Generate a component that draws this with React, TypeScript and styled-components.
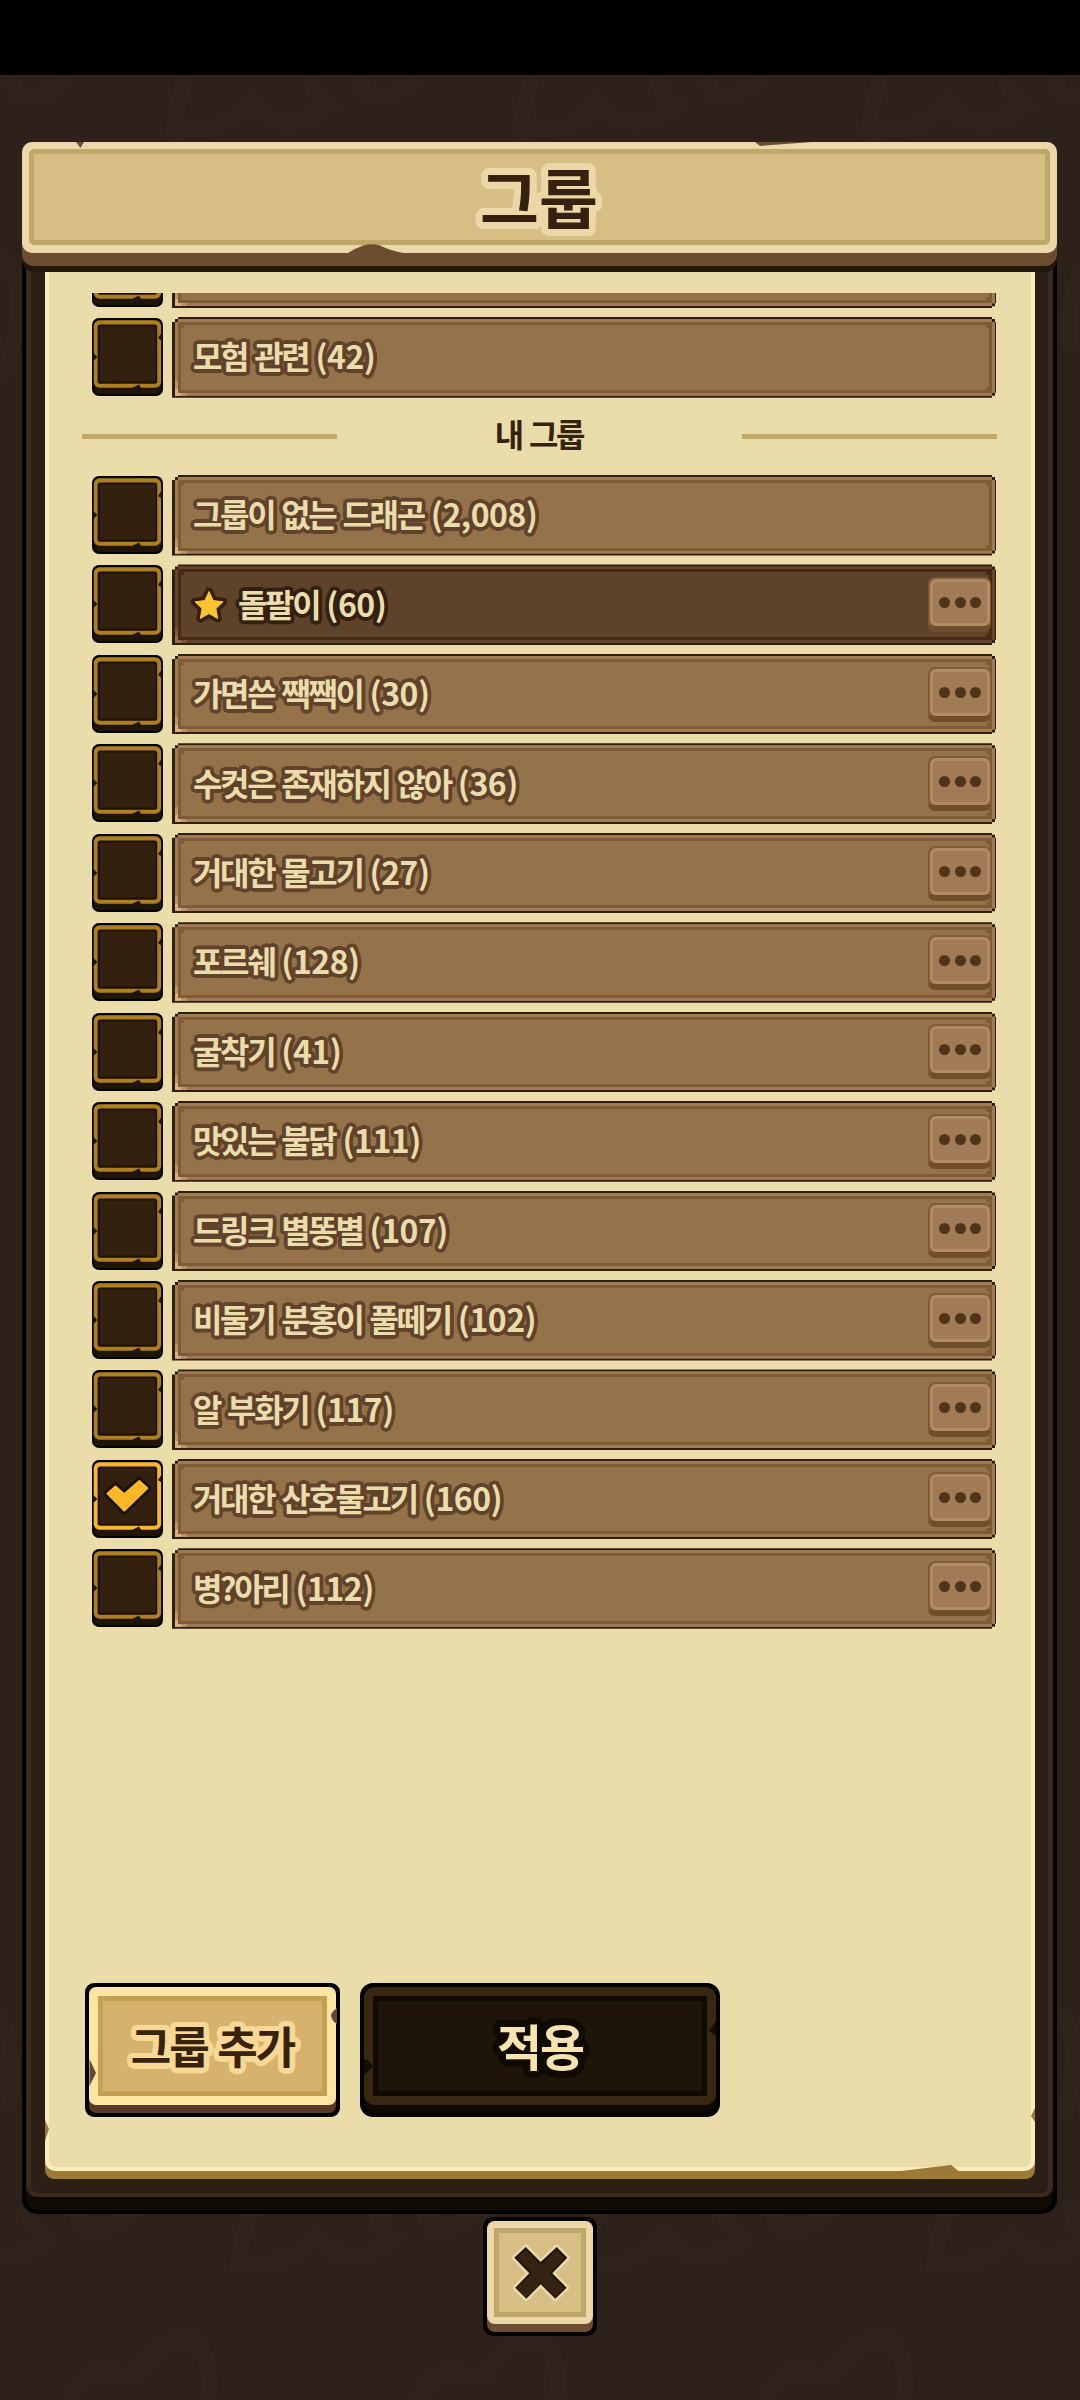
import React from 'react';
import styled, { createGlobalStyle, css } from 'styled-components';

const GlobalStyle = createGlobalStyle`
  * { box-sizing: border-box; }
  body { margin: 0; background: #2e211a; }
  button { border: 0; padding: 0; margin: 0; background: none; font: inherit; }
`;

const ring = (radius: number, color: string) =>
  [radius, radius * 0.55]
    .flatMap((r) =>
      Array.from({ length: 24 }, (_, i) => {
        const a = (i * Math.PI) / 12;
        return `${(Math.cos(a) * r).toFixed(2)}px ${(Math.sin(a) * r).toFixed(2)}px 0 ${color}`;
      }),
    )
    .join(', ');

const outlined = css<{ $outline: string; $stroke: number }>`
  text-shadow: ${(p) => ring(p.$stroke, p.$outline)};
`;

const Screen = styled.div`
  position: relative;
  display: flex;
  flex-direction: column;
  width: 1080px;
  height: 2400px;
  overflow: hidden;
  background: #2e211a;
  font-family: 'Noto Sans CJK KR', 'Noto Sans', sans-serif;
  font-weight: 700;
`;

const Backdrop = styled.svg`
  position: absolute;
  inset: 0;
`;

const StatusBar = styled.div`
  position: relative;
  flex: none;
  height: 75px;
  background: #000;
`;

const Dialog = styled.main`
  position: relative;
  display: flex;
  flex-direction: column;
  align-items: center;
  width: 1035px;
  margin: 67px 0 0 22px;
`;

const Header = styled.header`
  position: relative;
  z-index: 1;
  width: 100%;
  height: 130px;
  padding-bottom: 6px;
  border-radius: 10px 10px 12px 12px;
  background: #22170d;
`;

const HeaderSide = styled.div`
  height: 124px;
  padding-bottom: 14px;
  border-radius: 10px 10px 12px 12px;
  background: #6c4d32;
`;

const HeaderFace = styled.div`
  height: 110.5px;
  padding: 7px;
  border-radius: 10px;
  background: #ebd7a7;
`;

const HeaderPlate = styled.div`
  display: flex;
  align-items: center;
  justify-content: center;
  height: 96px;
  padding: 0 1px 5px 0;
  border: 5px solid #bfa669;
  border-radius: 5px;
  background: #d7be84;
`;

const Title = styled.h1<{ $outline: string; $stroke: number }>`
  margin: 0;
  font-size: 64px;
  line-height: 80px;
  color: #35210f;
  ${outlined}
`;

const Chips = styled.svg`
  position: absolute;
  left: 0;
  top: 0;
  overflow: visible;
  pointer-events: none;
`;

const Panel = styled.section`
  width: 100%;
  height: 1956px;
  margin-top: -14px;
  padding: 0 4px 4px;
  border-radius: 0 0 15px 15px;
  background: #000;
`;

const PanelSide = styled.div`
  height: 1952px;
  padding-bottom: 13px;
  border-radius: 0 0 12px 12px;
  background: #100a04;
`;

const PanelRim = styled.div`
  height: 1939px;
  padding: 0 13px 14px 14px;
  border: solid #3a291d;
  border-width: 0 5px 4px;
  border-radius: 0 0 11px 11px;
  background: #2c1f17;
`;

const SheetEdge = styled.div`
  position: relative;
  height: 1921px;
  padding-bottom: 8px;
  border-radius: 0 0 9px 9px;
  background: #9c7a36;
`;

const Sheet = styled.div`
  display: flex;
  flex-direction: column;
  height: 1913px;
  padding: 35px 34px 50px 33px;
  border: solid #fbedbd;
  border-width: 0 4px 4px;
  border-radius: 0 0 10px 10px;
  background: #eadda9;
`;

const List = styled.div`
  flex: 1;
  min-height: 0;
  overflow: hidden;
`;

const Rows = styled.div<{ $scroll?: number }>`
  display: flex;
  flex-direction: column;
  gap: 8.9px;
  margin-top: ${(p) => -(p.$scroll ?? 0)}px;
`;

const Row = styled.div`
  display: flex;
  align-items: flex-start;
  gap: 9px;
  height: 80.55px;
  padding: 0 1px 0 10px;
`;

const CheckButton = styled.button`
  display: block;
  width: 71px;
  height: 78px;
  margin-top: 1px;
  svg { display: block; }
`;

const Frame = styled.div`
  flex: 1;
  height: 80.55px;
  padding: 2px 1px 2px 3px;
  background: #2d2010;
  clip-path: polygon(
    6px 0, calc(100% - 4px) 0, calc(100% - 4px) 2px, calc(100% - 1px) 2px, calc(100% - 1px) 5px, 100% 5px,
    100% calc(100% - 5px), calc(100% - 1px) calc(100% - 5px), calc(100% - 1px) calc(100% - 2px),
    calc(100% - 4px) calc(100% - 2px), calc(100% - 4px) 100%, 0 100%, 0 5px, 3px 5px, 3px 2px, 6px 2px
  );
`;

const Rim = styled.div<{ $active?: boolean }>`
  --rim: ${(p) => (p.$active ? '#664529' : '#9f7b58')};
  --groove: ${(p) => (p.$active ? '#462a14' : '#7f5c35')};
  --fill: ${(p) => (p.$active ? '#5e432a' : '#94734a')};
  --glint: ${(p) => (p.$active ? '#9a6c48' : '#dcae84')};
  position: relative;
  display: flex;
  align-items: center;
  justify-content: space-between;
  height: 100%;
  padding: 0 1px 0 15px;
  border: 3px solid var(--rim);
  box-shadow: inset 0 0 0 3px var(--groove);
  background:
    linear-gradient(var(--groove), var(--groove)) 3px 3px / 3px 3px no-repeat,
    linear-gradient(var(--groove), var(--groove)) calc(100% - 3px) 3px / 3px 3px no-repeat,
    linear-gradient(var(--groove), var(--groove)) calc(100% - 3px) calc(100% - 3px) / 3px 3px no-repeat,
    var(--fill);
  clip-path: polygon(
    3px 0, calc(100% - 3px) 0, calc(100% - 3px) 3px, 100% 3px, 100% calc(100% - 3px),
    calc(100% - 3px) calc(100% - 3px), calc(100% - 3px) 100%, 0 100%, 0 3px, 3px 3px
  );

  &::before {
    content: '';
    position: absolute;
    left: -3px;
    bottom: -3px;
    width: 12px;
    height: 15px;
    background:
      linear-gradient(var(--glint), var(--glint)) 0 100% / 6px 3px no-repeat,
      linear-gradient(var(--glint), var(--glint)) 0 100% / 3px 7px no-repeat,
      linear-gradient(color-mix(in srgb, var(--glint) 45%, var(--rim)), color-mix(in srgb, var(--glint) 45%, var(--rim))) 0 100% / 12px 3px no-repeat,
      linear-gradient(color-mix(in srgb, var(--glint) 45%, var(--rim)), color-mix(in srgb, var(--glint) 45%, var(--rim))) 0 100% / 3px 15px no-repeat;
  }
`;

const LabelGroup = styled.div`
  display: flex;
  align-items: center;
  gap: 12px;
  padding-bottom: 4px;
`;

const Label = styled.span<{ $outline: string; $stroke: number }>`
  font-size: 32px;
  line-height: 46px;
  letter-spacing: -2.35px;
  word-spacing: 2.1px;
  white-space: nowrap;
  color: #ebdcab;
  ${outlined}
`;

const Count = styled.span`
  letter-spacing: -0.5px;
`;

const Star = styled.svg`
  display: block;
  margin-left: -1px;
  margin-top: 4px;
  overflow: visible;
`;

const MoreEdge = styled.button`
  display: block;
  width: 63px;
  height: 55px;
  padding: 2px 1px 6px 2px;
  border-radius: 7px;
  background: linear-gradient(#805c36 0 48px, #704e29 49px);
`;

const MoreFace = styled.span`
  display: flex;
  align-items: center;
  justify-content: center;
  gap: 4.4px;
  height: 47px;
  border: 3px solid #b18b65;
  border-radius: 6px;
  background: #a07b55;
`;

const Dot = styled.i`
  width: 11px;
  height: 11px;
  border-radius: 50%;
  background: #4f3418;
`;

const SectionHead = styled.div`
  display: grid;
  grid-template-columns: 255px 1fr 255px;
  align-items: center;
  height: 77.4px;
`;

const Rule = styled.div`
  height: 5px;
  background: #c1a768;
`;

const SectionTitle = styled.h2`
  margin: 0;
  padding: 0 1px 7px 0;
  font-size: 32px;
  line-height: 46px;
  letter-spacing: -2.35px;
  word-spacing: 2.1px;
  text-align: center;
  font-weight: 700;
  color: #35230f;
`;

const Footer = styled.footer`
  display: flex;
  flex: none;
  gap: 20px;
  height: 134px;
  padding-left: 3px;
`;

type Tone = { side: string; face: string; line: string; plate: string; radius: number };

const Block = styled.button<{ $w: number; $h: number; $tone: Tone }>`
  position: relative;
  display: block;
  flex: none;
  width: ${(p) => p.$w}px;
  height: ${(p) => p.$h}px;
  padding: 4px;
  border-radius: ${(p) => p.$tone.radius + 2}px;
  background: #000;
`;

const BlockSide = styled.span<{ $tone: Tone }>`
  display: block;
  height: 100%;
  padding-bottom: 8px;
  border-radius: ${(p) => p.$tone.radius}px;
  background: ${(p) => p.$tone.side};
`;

const BlockFace = styled.span<{ $tone: Tone; $pad: number }>`
  display: block;
  height: 100%;
  padding: ${(p) => p.$pad}px;
  border-radius: ${(p) => p.$tone.radius}px;
  background: ${(p) => p.$tone.face};
`;

const BlockPlate = styled.span<{ $tone: Tone }>`
  display: flex;
  align-items: center;
  justify-content: center;
  height: 100%;
  border: 5px solid ${(p) => p.$tone.line};
  background: ${(p) => p.$tone.plate};
`;

const ButtonText = styled.span<{ $outline: string; $stroke: number; $size: number; $color: string }>`
  padding-bottom: 1px;
  font-size: ${(p) => p.$size}px;
  line-height: 1.4;
  letter-spacing: -2px;
  word-spacing: 1.5px;
  white-space: nowrap;
  color: ${(p) => p.$color};
  ${outlined}
`;

const CloseSlot = styled.div`
  margin-top: 3px;
  padding-left: 1px;
`;

const honey: Tone = { side: '#593a28', face: '#ffe5a3', line: '#c4a050', plate: '#d5b26d', radius: 7 };
const ebony: Tone = { side: '#0e0a02', face: '#3a2713', line: '#100b02', plate: '#1e1409', radius: 11 };
const sand: Tone = { side: '#6c4d32', face: '#ebd7a7', line: '#bfa669', plate: '#d7be84', radius: 8 };

function Checkbox({ checked }: { checked?: boolean }) {
  const gold = checked ? '#f9b62d' : '#ad7f1f';
  return (
    <CheckButton role="checkbox" aria-checked={!!checked}>
      <svg width="71" height="78" viewBox="0 0 71 78">
        <rect width="71" height="78" rx="7" fill="#000" />
        <rect x="1.7" y="2" width="67.6" height="74" rx="6" fill="#1f1508" />
        <rect x="1.7" y="2.3" width="67.4" height="67.4" rx="6" fill={gold} />
        <rect x="5.6" y="6.5" width="59.6" height="59.2" rx="2.5" fill="#1f1204" />
        <rect x="7.8" y="8.5" width="55.6" height="55" fill="#33200f" />
        <path d="M1 34.5L5.3 39L1 43.5Z M70 14L66 20L70 23Z M40 70L47 66.5L49.5 70.5Z" fill="#1f1508" />
        {checked && (
          <path
            d="M15.5 33.5L23.5 26.6L32.3 34.3L47.3 21L55.2 28.3L32.3 50.5Z"
            fill="none"
            stroke="#1b1105"
            strokeWidth="8"
            strokeLinejoin="round"
          />
        )}
        {checked && (
          <path
            d="M15.5 33.5L23.5 26.6L32.3 34.3L47.3 21L55.2 28.3L32.3 50.5Z"
            fill="#fcb827"
            stroke="#fcb827"
            strokeWidth="2"
            strokeLinejoin="round"
          />
        )}
      </svg>
    </CheckButton>
  );
}

const STAR = 'M17 3.5L21.2 12.6L31 13.8L23.9 20.6L25.7 30.5L17 25.6L8.3 30.5L10.1 20.6L3 13.8L12.8 12.6Z';

type Group = { name?: string; count?: string; starred?: boolean; checked?: boolean; fixed?: boolean };

function GroupRow({ name, count, starred, checked, fixed }: Group) {
  return (
    <Row>
      <Checkbox checked={checked} />
      <Frame>
        <Rim $active={starred}>
          <LabelGroup>
            {starred && (
              <Star width="34" height="34" viewBox="0 0 34 34">
                <path d={STAR} fill="none" stroke="#332010" strokeWidth="8" strokeLinejoin="round" />
                <path d={STAR} fill="#ffc331" stroke="#ffc331" strokeWidth="1" strokeLinejoin="round" />
              </Star>
            )}
            {name && (
              <Label $outline={starred ? '#332010' : '#61432b'} $stroke={3.6}>
                {name} <Count>({count})</Count>
              </Label>
            )}
          </LabelGroup>
          {!fixed && (
            <MoreEdge>
              <MoreFace>
                <Dot />
                <Dot />
                <Dot />
              </MoreFace>
            </MoreEdge>
          )}
        </Rim>
      </Frame>
    </Row>
  );
}

const systemGroups: Group[] = [{ fixed: true }, { name: '모험 관련', count: '42', fixed: true }];

const myGroups: Group[] = [
  { name: '그룹이 없는 드래곤', count: '2,008', fixed: true },
  { name: '돌팔이', count: '60', starred: true },
  { name: '가면쓴 짹짹이', count: '30' },
  { name: '수컷은 존재하지 않아', count: '36' },
  { name: '거대한 물고기', count: '27' },
  { name: '포르쉐', count: '128' },
  { name: '굴착기', count: '41' },
  { name: '맛있는 불닭', count: '111' },
  { name: '드링크 별똥별', count: '107' },
  { name: '비둘기 분홍이 풀떼기', count: '102' },
  { name: '알 부화기', count: '117' },
  { name: '거대한 산호물고기', count: '160', checked: true },
  { name: '병?아리', count: '112' },
];

function Motif() {
  return (
    <>
      <path d="M22 -10C16 15 10 30 8 52C50 54 72 40 86 22C100 42 130 54 164 26Q148 18 144 -10" />
      <path d="M192 -10Q198 14 206 18Q232 16 254 -4" />
    </>
  );
}

export default function App() {
  return (
    <Screen>
      <GlobalStyle />
      <Backdrop width="1080" height="2400" fill="none" stroke="#30231c" strokeWidth="17">
        {[-183, 165, 512, 860].map((x) => (
          <g key={x} transform={`translate(${x} 80)`}>
            <Motif />
          </g>
        ))}
        {[-118, 230, 578, 926].map((x) => (
          <g key={x} transform={`translate(${x} 2213)`}>
            <Motif />
          </g>
        ))}
        {[58, 406, 754].map((x) => (
          <path
            key={x}
            transform={`translate(${x} 2330)`}
            d="M8 80C18 55 30 40 42 42Q62 46 80 43C98 14 122 6 132 9C150 20 156 45 148 80"
          />
        ))}
        <path d="M-10 250Q28 270 16 330T-10 380M1090 260Q1064 290 1070 350M-10 2010Q20 2030 10 2110M1060 2010Q1084 2040 1064 2120" />
      </Backdrop>
      <StatusBar />
      <Dialog>
        <Header>
          <HeaderSide>
            <HeaderFace>
              <HeaderPlate>
                <Title $outline="#ebd7a7" $stroke={7}>그룹</Title>
              </HeaderPlate>
            </HeaderFace>
          </HeaderSide>
          <Chips width="1035" height="130" fill="#6c4d32">
            <path d="M54 0H62L58.5 6Z" />
            <path d="M733 0H790L738 4Z" />
            <path d="M326 111Q334 106 341 103.5Q350 101 358 103.5Q368 108.5 381 111Z" />
          </Chips>
        </Header>
        <Panel>
          <PanelSide>
            <PanelRim>
              <SheetEdge>
                <Sheet>
                  <List>
                    <Rows $scroll={65.35}>
                      {systemGroups.map((g, i) => (
                        <GroupRow key={i} {...g} />
                      ))}
                    </Rows>
                    <SectionHead>
                      <Rule />
                      <SectionTitle>내 그룹</SectionTitle>
                      <Rule />
                    </SectionHead>
                    <Rows>
                      {myGroups.map((g) => (
                        <GroupRow key={g.name} {...g} />
                      ))}
                    </Rows>
                  </List>
                  <Footer>
                    <Block $w={255} $h={134} $tone={honey}>
                      <BlockSide $tone={honey}>
                        <BlockFace $tone={honey} $pad={9}>
                          <BlockPlate $tone={honey}>
                            <ButtonText $size={44} $color="#38230f" $outline="#f8d894" $stroke={5.5}>
                              그룹 추가
                            </ButtonText>
                          </BlockPlate>
                        </BlockFace>
                      </BlockSide>
                      <Chips width="255" height="134" fill="#6b4632">
                        <path d="M4.5 76L11 90L4.5 103Z M252 25Q246 29 246 33Q247 38 252 41Z" />
                      </Chips>
                    </Block>
                    <Block $w={360} $h={134} $tone={ebony}>
                      <BlockSide $tone={ebony}>
                        <BlockFace $tone={ebony} $pad={9}>
                          <BlockPlate $tone={ebony}>
                            <ButtonText $size={49} $color="#f7e3af" $outline="#100b02" $stroke={6.8}>
                              적용
                            </ButtonText>
                          </BlockPlate>
                        </BlockFace>
                      </BlockSide>
                      <Chips width="360" height="134" fill="#130d04">
                        <path d="M4 76L8 77L13 84L4 92Z M356 38L349 48L356 53Z" />
                      </Chips>
                    </Block>
                  </Footer>
                </Sheet>
                <Chips width="990" height="1921" fill="#9c7a36">
                  <path d="M0 1862L4 1871L0 1883Z M990 1850L986 1858L990 1864Z M852 1913.5L906 1907L914 1913.5Z" />
                </Chips>
              </SheetEdge>
            </PanelRim>
          </PanelSide>
        </Panel>
        <CloseSlot>
          <Block $w={114} $h={119} $tone={sand} aria-label="닫기">
            <BlockSide $tone={sand}>
              <BlockFace $tone={sand} $pad={7}>
                <BlockPlate $tone={sand}>
                  <svg width="60" height="58" viewBox="510 2243 60 58">
                    <path
                      d="M525.7 2246L540.7 2261L556.7 2246L567.3 2256.7L552.3 2272.3L566.7 2286.7L555.3 2297.7L540.7 2283.3L526.3 2297.7L515.3 2286.7L529.3 2272.3L514.3 2256.7Z"
                      fill="#22150a"
                      stroke="#ecd9ab"
                      strokeWidth="5"
                      strokeLinejoin="round"
                      paintOrder="stroke"
                    />
                    <path
                      d="M525.7 2249L540.7 2264L556.7 2249L564.3 2256.7L549.3 2272.3L565 2287L555.3 2296.5L540.7 2282L526.3 2296.5L516.6 2287L532.3 2272.3L517.3 2256.7Z"
                      fill="#362212"
                    />
                  </svg>
                </BlockPlate>
              </BlockFace>
            </BlockSide>
          </Block>
        </CloseSlot>
      </Dialog>
    </Screen>
  );
}
